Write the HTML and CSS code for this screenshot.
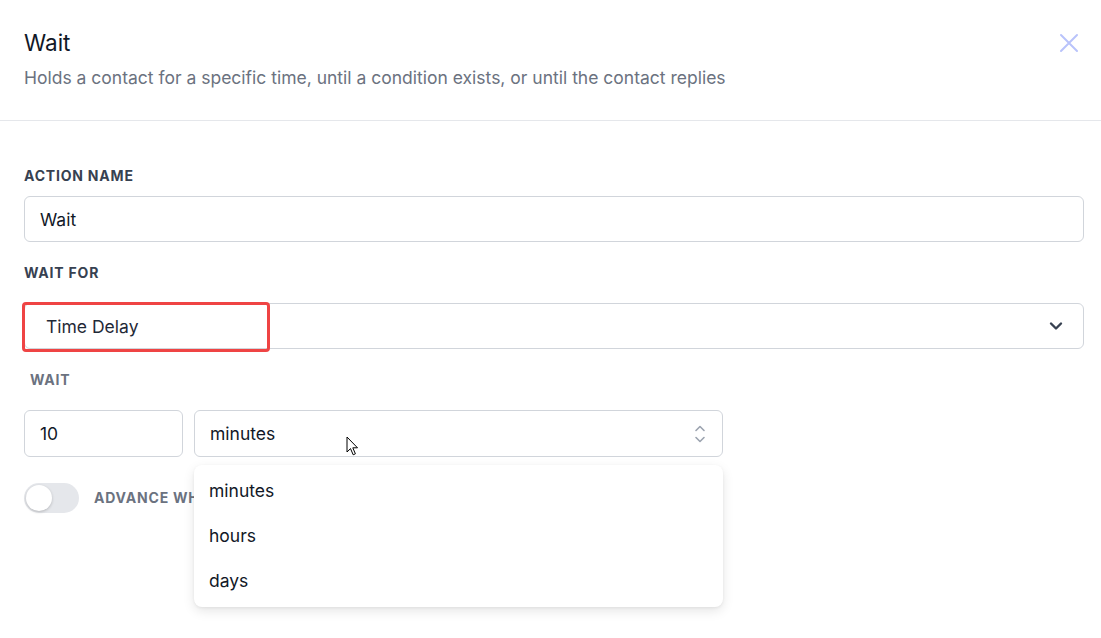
FILE: index.html
```html
<!DOCTYPE html>
<html>
<head>
<meta charset="utf-8">
<link rel="stylesheet" href="styles.css">
</head>
<body>
<div class="modal">
  <div class="header">
    <div class="titles">
      <h1 class="title">Wait</h1>
      <p class="subtitle">Holds a contact for a specific time, until a condition exists, or until the contact replies</p>
    </div>
    <svg class="close" width="20" height="20" viewBox="0 0 20 20"><path d="M2 2 L18 18 M18 2 L2 18" stroke="#b9c3fb" stroke-width="2" stroke-linecap="round" fill="none"/></svg>
  </div>
  <div class="body">
    <label class="label">ACTION NAME</label>
    <div class="field">Wait</div>

    <label class="label gap">WAIT FOR</label>
    <div class="field select">
      <span class="sel-text">Time Delay</span>
      <svg class="chev" width="14" height="10" viewBox="0 0 14 10"><path d="M2 2.5 L7 7.5 L12 2.5" stroke="#374151" stroke-width="2.4" fill="none" stroke-linecap="round" stroke-linejoin="round"/></svg>
      <div class="highlight"></div>
    </div>

    <label class="label gap light indent">WAIT</label>
    <div class="row">
      <div class="field num">10</div>
      <div class="unit-wrap">
        <div class="field unit">
          <span>minutes</span>
          <svg class="updown" width="12" height="20" viewBox="0 0 12 20"><path d="M2 6.5 L6 2.5 L10 6.5 M2 13.5 L6 17.5 L10 13.5" stroke="#9ca3af" stroke-width="1.6" fill="none" stroke-linecap="round" stroke-linejoin="round"/></svg>
        </div>
        <ul class="menu">
          <li>minutes</li>
          <li>hours</li>
          <li>days</li>
        </ul>
        <svg class="cursor" width="14" height="21" viewBox="0 0 14 21"><path d="M1 1 L1 16 L4.5 12.6 L7.2 18.8 L9.4 17.8 L6.8 11.8 L11.5 11.8 Z" fill="#fff" stroke="#000" stroke-width="1" stroke-linejoin="round"/></svg>
      </div>
    </div>

    <div class="toggle-row">
      <div class="toggle"><div class="knob"></div></div>
      <span class="label light toggle-label">ADVANCE WHEN CONTACT REPLIES</span>
    </div>
  </div>
</div>
</body>
</html>
```

FILE: styles.css
```css
* { box-sizing: border-box; }
html, body { margin: 0; padding: 0; background: #fff; }
body {
  font-family: Inter, "Noto Sans", "Liberation Sans", sans-serif;
  color: #111827;
  width: 1101px;
  height: 638px;
  overflow: hidden;
}
.modal { width: 1101px; }
.header {
  display: flex;
  justify-content: space-between;
  align-items: flex-start;
  padding: 28px 24px 30px 24px;
  border-bottom: 1px solid #e5e7eb;
}
.title {
  margin: 0;
  font-size: 22.5px;
  line-height: 30px;
  font-weight: 400;
  color: #111827;
}
.subtitle {
  margin: 8px 0 0 0;
  font-size: 17.5px;
  line-height: 24px;
  color: #6b7280;
}
.close { margin-top: 5px; margin-right: -2px; }
.body {
  padding: 45px 17px 0 24px;
  display: flex;
  flex-direction: column;
  align-items: stretch;
}
.label {
  display: block;
  font-size: 14px;
  line-height: 20px;
  font-weight: 700;
  color: #374151;
  letter-spacing: 0.8px;
}
.label.gap { margin-top: 21px; }
.label.light { color: #6b7280; }
.label.indent { padding-left: 6px; }
.field {
  height: 46px;
  border: 1px solid #d1d5db;
  border-radius: 6px;
  padding: 0 15px;
  display: flex;
  align-items: center;
  font-size: 17.5px;
  color: #111827;
  margin-top: 10px;
  background: #fff;
}
.select {
  position: relative;
  justify-content: space-between;
  margin-top: 20px;
  padding-left: 21px;
  padding-right: 20px;
}
.sel-text { color: #1f2937; }
.highlight {
  position: absolute;
  left: -3px;
  top: -2px;
  width: 248px;
  height: 50px;
  border: 3px solid #ef4444;
  border-radius: 4px;
}
.row {
  display: flex;
  gap: 11px;
  margin-top: 20px;
}
.row .field { margin-top: 0; height: 47px; }
.num { width: 159px; }
.unit-wrap { position: relative; width: 529px; }
.unit { width: 529px; justify-content: space-between; padding-right: 16px; }
.menu {
  position: absolute;
  left: 0;
  top: 55px;
  width: 529px;
  margin: 0;
  padding: 3px 0 4px 0;
  list-style: none;
  background: #fff;
  border-radius: 8px;
  box-shadow: 0 4px 12px rgba(0,0,0,0.10), 0 1px 3px rgba(0,0,0,0.06);
  z-index: 2;
}
.menu li {
  height: 45px;
  line-height: 45px;
  padding-left: 15px;
  font-size: 17.5px;
  color: #111827;
}
.cursor {
  position: absolute;
  left: 152px;
  top: 26px;
  z-index: 3;
}
.toggle-row {
  display: flex;
  align-items: center;
  gap: 15px;
  margin-top: 26px;
}
.toggle {
  width: 55px;
  height: 30px;
  border-radius: 15px;
  background: #e5e7eb;
  padding: 2px;
}
.knob {
  width: 26px;
  height: 26px;
  border-radius: 50%;
  background: #fff;
  box-shadow: 0 1px 3px rgba(0,0,0,0.2);
}
.toggle-label { white-space: nowrap; }
```
